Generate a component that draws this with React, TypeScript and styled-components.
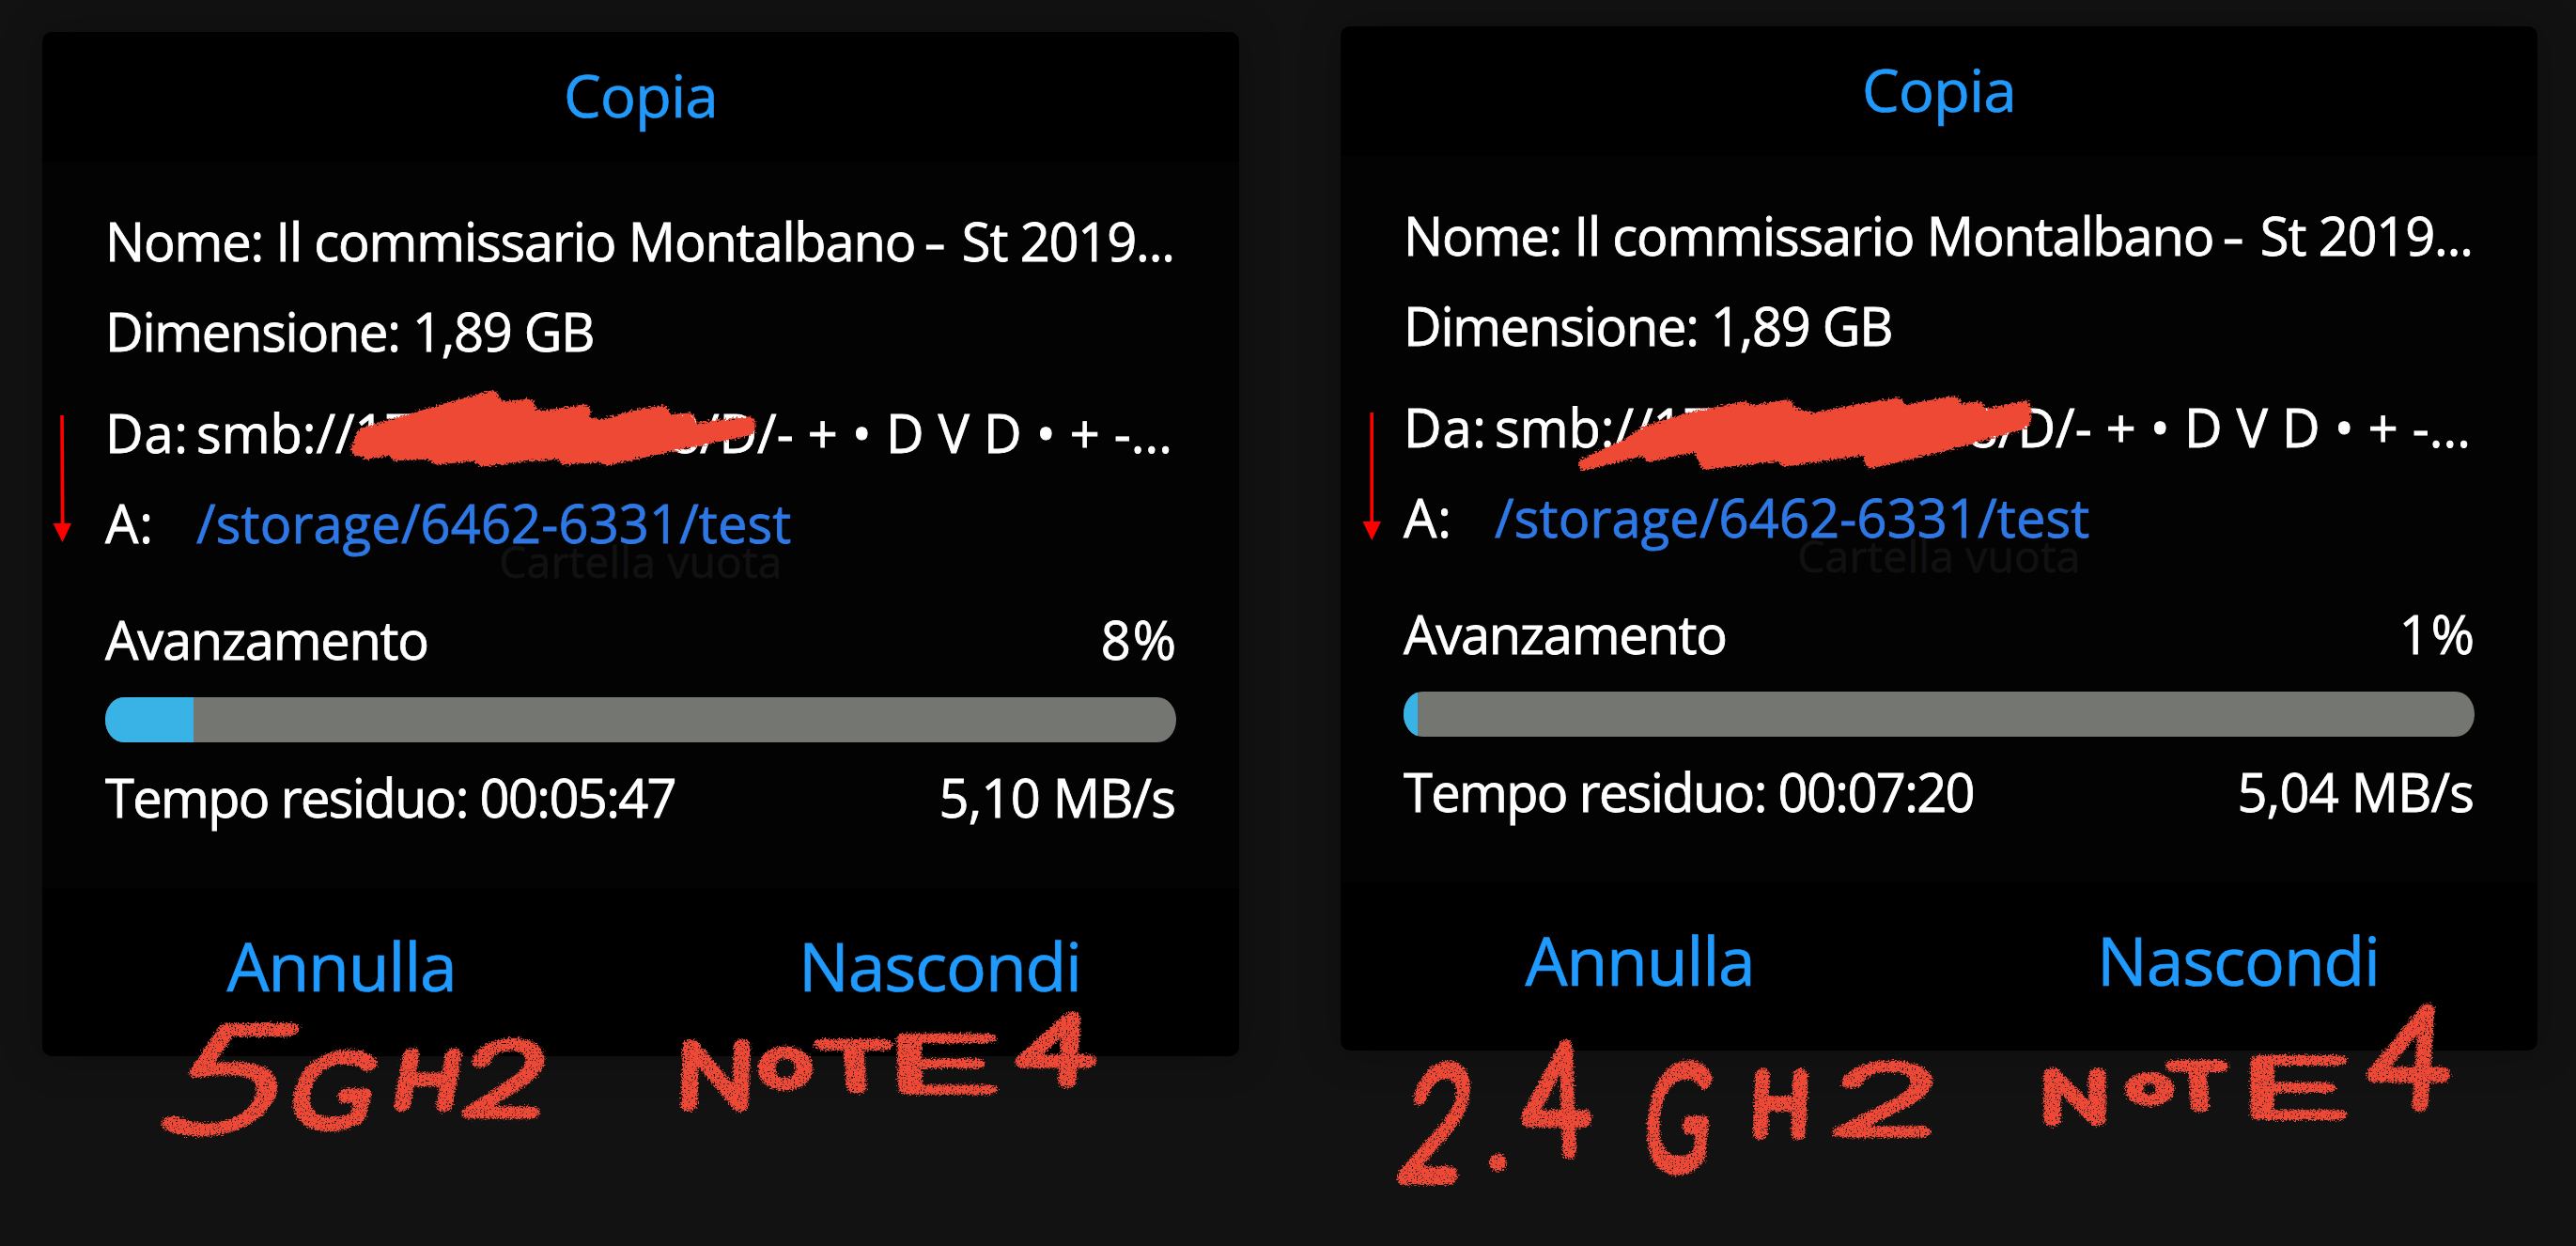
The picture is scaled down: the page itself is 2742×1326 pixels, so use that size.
import React, { FunctionComponent } from "react"
import styled, { createGlobalStyle } from "styled-components"

const GlobalStyle = createGlobalStyle`
  * {
    box-sizing: border-box;
  }

  body {
    margin: 0;
    background: #121212;
    font-family: "Open Sans", "Noto Sans", sans-serif;
  }
`

const Page = styled.main`
  position: relative;
  display: flex;
  align-items: flex-start;
  gap: 108px;
  width: 2742px;
  height: 1326px;
  padding: 28px 0 0 45px;
  overflow: hidden;
`

const Dialog = styled.section<{ $drop: number }>`
  flex: 0 0 1274px;
  height: 1090px;
  margin-top: ${({ $drop }) => $drop}px;
  display: flex;
  flex-direction: column;
  border-radius: 10px;
  background: #000;
  box-shadow: 0 0 44px rgba(0, 0, 0, 0.25);
`

const Title = styled.h1`
  height: 138px;
  margin: 0;
  color: #2199fb;
  font-size: 63px;
  font-weight: 400;
  line-height: 133px;
  letter-spacing: -0.6px;
  text-align: center;
  -webkit-text-stroke: 0.7px;
`

const Body = styled.div`
  position: relative;
  height: 773px;
  padding: 36px 67px 0 67px;
  background: #030303;
  color: #fff;
  font-size: 56px;
  line-height: 96px;
  white-space: pre;
  -webkit-text-stroke: 0.8px;
`

const Behind = styled.div`
  position: absolute;
  top: 377px;
  left: 0;
  width: 100%;
  color: #111;
  font-size: 46px;
  letter-spacing: 0.3px;
  text-align: center;
`

const Line = styled.div<{ $spacing?: number; $top?: number }>`
  position: relative;
  display: flex;
  height: 96px;
  margin-top: ${({ $top = 0 }) => $top}px;
  letter-spacing: ${({ $spacing = 0 }) => $spacing}px;
`

const Between = styled(Line)`
  justify-content: space-between;
`

const Label = styled.span`
  flex: 0 0 97px;
  letter-spacing: 0.8px;
`

const Dash = styled.span`
  display: inline-block;
  margin: 0 8px 0 -2px;
  transform: scaleX(1.3);
`

const Tail = styled.span`
  margin-left: auto;
  margin-right: 4px;
  word-spacing: 0.5px;
`

const Target = styled.span`
  color: #2e78e6;
  letter-spacing: 0.15px;
`

const Value = styled.span<{ $spacing?: number }>`
  margin-right: ${({ $spacing = 0 }) => -$spacing}px;
  letter-spacing: ${({ $spacing = 0 }) => $spacing}px;
`

const Track = styled.div`
  height: 48px;
  margin: 14px 0 10px;
  overflow: hidden;
  border-radius: 20px / 24px;
  background: #747672;
`

const Fill = styled.div`
  height: 100%;
  background: #39b2e5;
`

const Actions = styled.footer`
  flex: 1;
  display: flex;
`

const Action = styled.button`
  flex: 1;
  height: 166px;
  padding: 0;
  border: 0;
  background: none;
  color: #1f9bff;
  font-family: inherit;
  font-size: 71.5px;
  line-height: 166px;
  letter-spacing: -1.2px;
  -webkit-text-stroke: 0.7px;
`

const Ink = styled.svg`
  position: absolute;
  inset: 0;
  pointer-events: none;
`

const Scribble = styled.path`
  fill: #ee4836;
  stroke: #ee4836;
  stroke-width: 13px;
  stroke-linejoin: round;
  filter: url(#rough);
`

const Writing = styled.g`
  fill: #ee4836;
  stroke: #ee4836;
  stroke-linejoin: round;
  stroke-linecap: round;
  font-family: Lato, sans-serif;
  font-weight: 100;
  font-size: 100px;
  text-anchor: middle;
  filter: url(#chalk);
`

const Arrow = styled.path`
  fill: #f00;
`

type CopyProps = {
  drop: number
  percent: string
  progress: number
  time: string
  speed: string
}

const CopyDialog: FunctionComponent<CopyProps> = ({
  drop,
  percent,
  progress,
  time,
  speed,
}) => (
  <Dialog $drop={drop}>
    <Title>Copia</Title>
    <Body>
      <Behind>Cartella vuota</Behind>
      <Line $spacing={-1.15}>
        <span>
          Nome: Il commissario Montalbano <Dash>-</Dash> St 2019...
        </span>
      </Line>
      <Line $spacing={-1.25}>Dimensione: 1,89 GB</Line>
      <Line $top={12}>
        <Label>Da:</Label>
        <span>smb://17</span>
        <Tail>8/D/- + • D V D • + -...</Tail>
      </Line>
      <Line>
        <Label>A:</Label>
        <Target>/storage/6462-6331/test</Target>
      </Line>
      <Between $top={28}>
        <Value $spacing={-1.25}>Avanzamento</Value>
        <Value $spacing={2}>{percent}</Value>
      </Between>
      <Track>
        <Fill style={{ width: `${progress}%` }} />
      </Track>
      <Between>
        <Value $spacing={-1.65}>Tempo residuo: {time}</Value>
        <Value $spacing={-0.8}>{speed}</Value>
      </Between>
    </Body>
    <Actions>
      <Action>Annulla</Action>
      <Action>Nascondi</Action>
    </Actions>
  </Dialog>
)

// share of the font size that each letter's ink takes across
const inkWidth: Record<string, number> = {
  "2": 0.46,
  "4": 0.52,
  "5": 0.44,
  ".": 0.06,
  G: 0.58,
  H: 0.56,
  N: 0.56,
  O: 0.7,
  T: 0.55,
  E: 0.4,
}

type Letter = [string, number, number, number, number, number?]

// letter, left, top, right, bottom, slant
const notes: Letter[] = [
  ["5", 192, 1084, 308, 1210, -22],
  ["G", 317, 1115, 398, 1204, -14],
  ["H", 424, 1113, 490, 1184, -10],
  ["2", 498, 1102, 582, 1192, -8],
  ["N", 724, 1103, 800, 1184, -2],
  ["O", 806, 1112, 866, 1162],
  ["T", 869, 1102, 950, 1166, 4],
  ["E", 954, 1095, 1050, 1168, 2],
  ["4", 1083, 1073, 1168, 1159, -4],
  ["2", 1497, 1128, 1566, 1260, -10],
  [".", 1582, 1226, 1606, 1246],
  ["4", 1617, 1104, 1695, 1233, 2],
  ["G", 1754, 1128, 1822, 1248, -6],
  ["H", 1865, 1135, 1926, 1213, -2],
  ["2", 1956, 1125, 2060, 1213, -6],
  ["N", 2174, 1133, 2243, 1200],
  ["O", 2262, 1139, 2314, 1179],
  ["T", 2307, 1125, 2372, 1185, 4],
  ["E", 2394, 1118, 2488, 1195],
  ["4", 2521, 1065, 2611, 1183, -4],
]

const Note: FunctionComponent<{ letter: Letter }> = ({ letter }) => {
  const [char, left, top, right, bottom, slant = 0] = letter
  const pen = char === "." ? 13 : 16
  const sx = char === "." ? 1 : (right - left - pen) / (inkWidth[char] * 100)
  const sy = char === "." ? 1 : (bottom - top - pen) / 72
  // keep the slanted letter centred on its box
  const shift = (Math.tan((slant * Math.PI) / 180) * (bottom - top)) / 2
  const x = (left + right) / 2 + shift
  const y = bottom - pen / 2
  return (
    <text
      transform={`translate(${x} ${y}) skewX(${slant}) scale(${sx} ${sy})`}
      strokeWidth={(pen - 1) / Math.sqrt(sx * sy)}
    >
      {char}
    </text>
  )
}

const Annotations: FunctionComponent = () => (
  <Ink width="2742" height="1326" viewBox="0 0 2742 1326">
    <defs>
      <filter id="rough" x="-5%" y="-10%" width="110%" height="120%">
        <feTurbulence type="fractalNoise" baseFrequency="0.5" numOctaves="2" />
        <feDisplacementMap
          in="SourceGraphic"
          scale="9"
          xChannelSelector="R"
          yChannelSelector="G"
        />
      </filter>
      <filter
        id="chalk"
        filterUnits="userSpaceOnUse"
        colorInterpolationFilters="sRGB"
        x="0"
        y="1040"
        width="2742"
        height="286"
      >
        <feTurbulence
          type="fractalNoise"
          baseFrequency="0.6"
          numOctaves="2"
          result="noise"
        />
        <feDisplacementMap
          in="SourceGraphic"
          in2="noise"
          scale="9"
          xChannelSelector="R"
          yChannelSelector="G"
          result="edge"
        />
        <feColorMatrix
          in="noise"
          type="matrix"
          values="0 0 0 0 0  0 0 0 0 0  0 0 0 0 0  0 0 9 0 -2.4"
          result="grain"
        />
        <feComposite in="edge" in2="grain" operator="in" />
      </filter>
    </defs>
    <Scribble d="M380 478 386 462 470 437 524 422 527 430 540 434 563 431 566 443 582 443 622 437 620 449 640 453 675 443 706 438 709 448 733 446 735 457 797 450 797 457 720 473 646 489 640 485 602 488 597 482 555 485 514 490 506 484 465 488 457 482 423 484 416 478 391 482Z" />
    <Scribble d="M1687 494 1731 474 1751 460 1800 445 1858 434 1864 438 1902 432 1908 440 1930 446 1965 439 2020 430 2024 438 2080 428 2084 436 2105 434 2112 442 2155 433 2156 444 2154 450 2072 473 1992 492 1990 486 1998 476 1900 490 1896 484 1816 493 1811 480 1806 474 1756 485 1752 478Z" />
    <Arrow d="M64.2 442H67.8L68.6 557H76L66.5 577 56.5 557H64.8Z" />
    <Arrow d="M1458.4 439H1462V555H1470L1460.3 575 1450.5 555H1458.4Z" />
    <Writing>
      {notes.map((letter) => (
        <Note key={letter[1]} letter={letter} />
      ))}
    </Writing>
  </Ink>
)

const App: FunctionComponent = () => (
  <>
    <GlobalStyle />
    <Page>
      <CopyDialog
        drop={6}
        percent="8%"
        progress={8.25}
        time="00:05:47"
        speed="5,10 MB/s"
      />
      <CopyDialog
        drop={0}
        percent="1%"
        progress={1.3}
        time="00:07:20"
        speed="5,04 MB/s"
      />
      <Annotations />
    </Page>
  </>
)

export default App
